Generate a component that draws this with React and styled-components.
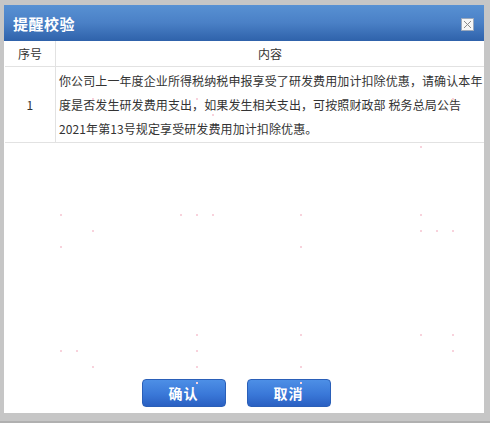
import React from 'react';
import styled, { createGlobalStyle } from 'styled-components';

const GlobalStyle = createGlobalStyle`
  html, body {
    margin: 0;
    padding: 0;
    background: #c6c6c6;
  }
  body {
    font-family: "Noto Sans CJK SC", "Liberation Sans", sans-serif;
  }
`;

const Frame = styled.div`
  width: 490px;
  height: 423px;
  box-sizing: border-box;
  padding: 5px 6px 8px 4px;
  background: #c6c6c6;
  border-bottom: 2px solid #b0b0b0;
`;

const Dialog = styled.div`
  position: relative;
  height: 100%;
  background: #fff;
  display: flex;
  flex-direction: column;
`;

const TitleBar = styled.div`
  height: 36px;
  box-sizing: border-box;
  padding: 0 10px 0 9px;
  display: flex;
  align-items: center;
  justify-content: space-between;
  background: linear-gradient(to bottom, #5891d3 0%, #4a80c6 50%, #2f62ab 100%);
`;

const Title = styled.span`
  color: #fff;
  font-size: 15px;
  font-weight: bold;
  letter-spacing: 0.5px;
`;

const CloseButton = styled.button`
  width: 13px;
  height: 13px;
  padding: 0;
  margin-top: 2px;
  border: 1px solid #9aa8bc;
  background: #f6f6f6;
  display: flex;
  align-items: center;
  justify-content: center;
  cursor: pointer;
`;

const Table = styled.table`
  width: calc(100% - 1px);
  margin-left: 1px;
  table-layout: fixed;
  border-collapse: collapse;
  font-size: 12px;
  letter-spacing: 0.1px;
  color: #333;
`;

const HeadCell = styled.th`
  height: 25px;
  font-weight: normal;
  text-align: center;
  border: 1px solid #e2e2e2;
  border-top: none;
  padding: 0;
  width: ${p => (p.narrow ? '50px' : 'auto')};
  &:first-child { border-left: none; }
  &:last-child { border-right: none; }
`;

const Cell = styled.td`
  border: 1px solid #e2e2e2;
  padding: ${p => (p.center ? '0' : '2px 0 1px 3px')};
  text-align: ${p => (p.center ? 'center' : 'left')};
  line-height: 24px;
  vertical-align: middle;
  white-space: ${p => (p.center ? 'normal' : 'nowrap')};
  &:first-child { border-left: none; }
  &:last-child { border-right: none; }
`;

const Body = styled.div`
  flex: 1;
  position: relative;
`;

const Footer = styled.div`
  display: flex;
  justify-content: center;
  gap: 21px;
  padding: 0 16px 6px 0;
`;

const Button = styled.button`
  width: 84px;
  height: 28px;
  border: 1px solid #2a5fb8;
  border-radius: 4px;
  background: linear-gradient(to bottom, #4d8fe6 0%, #3a78d8 55%, #2a60c2 100%);
  color: #fff;
  font-family: inherit;
  font-size: 14px;
  font-weight: bold;
  letter-spacing: 1px;
  cursor: pointer;
`;

const Dots = styled.svg`
  position: absolute;
  left: -4px;
  top: -5px;
  pointer-events: none;
`;

const dots = [
  [92, 98], [196, 98], [212, 114], [452, 98], [212, 130], [420, 146],
  [60, 214], [180, 214], [196, 214], [212, 214], [300, 214], [420, 214],
  [92, 230], [420, 230], [436, 230], [452, 230],
  [60, 246], [300, 246],
  [196, 334], [300, 334], [420, 334], [452, 334],
  [60, 350], [76, 350], [196, 350], [452, 350],
  [92, 366], [196, 366], [300, 366],
  [196, 382], [300, 382],
];

const lines = [
  '你公司上一年度企业所得税纳税申报享受了研发费用加计扣除优惠，请确认本年',
  '度是否发生研发费用支出，如果发生相关支出，可按照财政部 税务总局公告',
  '2021年第13号规定享受研发费用加计扣除优惠。',
];

export default function App() {
  return (
    <>
      <GlobalStyle />
      <Frame>
        <Dialog>
          <TitleBar>
            <Title>提醒校验</Title>
            <CloseButton aria-label="close">
              <svg width="9" height="9" viewBox="0 0 9 9">
                <path d="M1 1L8 8M8 1L1 8" stroke="#8a8a8a" strokeWidth="1" />
              </svg>
            </CloseButton>
          </TitleBar>
          <Table>
            <thead>
              <tr>
                <HeadCell narrow>序号</HeadCell>
                <HeadCell>内容</HeadCell>
              </tr>
            </thead>
            <tbody>
              <tr>
                <Cell center>1</Cell>
                <Cell>
                  {lines.map((line, i) => (
                    <React.Fragment key={i}>
                      {line}
                      {i < lines.length - 1 && <br />}
                    </React.Fragment>
                  ))}
                </Cell>
              </tr>
            </tbody>
          </Table>
          <Body />
          <Footer>
            <Button>确认</Button>
            <Button>取消</Button>
          </Footer>
          <Dots width="490" height="423">
            {dots.map(([x, y]) => (
              <rect key={`${x}-${y}`} x={x} y={y} width="2" height="2" fill="#f8d2dc" />
            ))}
          </Dots>
        </Dialog>
      </Frame>
    </>
  );
}
